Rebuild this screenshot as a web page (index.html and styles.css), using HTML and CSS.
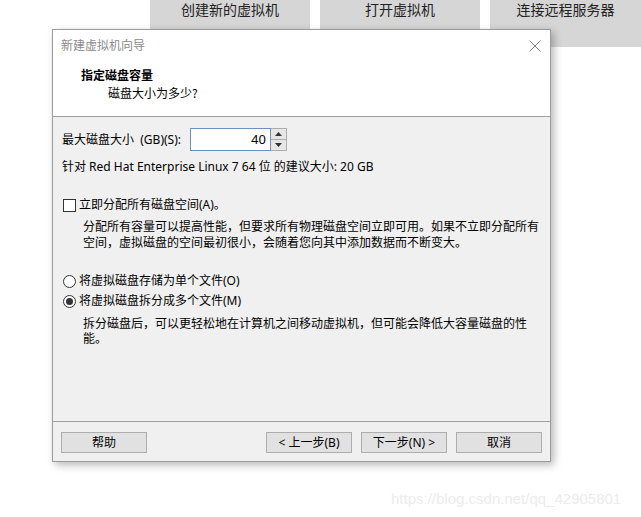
FILE: index.html
```html
<!DOCTYPE html>
<html lang="zh-CN">
<head>
<meta charset="utf-8">
<title>新建虚拟机向导</title>
<link rel="stylesheet" href="styles.css">
</head>
<body>
<div class="topbar">
  <div class="tbtn">创建新的虚拟机</div>
  <div class="tbtn">打开虚拟机</div>
  <div class="tbtn last">连接远程服务器</div>
</div>

<div class="dialog">
  <div class="head">
    <div class="titlebar">
      <span class="title">新建虚拟机向导</span>
      <svg class="close" width="12" height="12" viewBox="0 0 12 12"><path d="M0.5 0.5L11.5 11.5M11.5 0.5L0.5 11.5" stroke="#808080" stroke-width="1" fill="none"/></svg>
    </div>
    <div class="h1">指定磁盘容量</div>
    <div class="h2">磁盘大小为多少?</div>
  </div>

  <div class="body">
    <div class="sizerow">
      <span class="label">最大磁盘大小&nbsp; (GB)(S):</span>
      <div class="spin">
        <div class="spinval">40</div>
        <div class="spinbtns">
          <div class="sb"><svg width="7" height="4" viewBox="0 0 7 4"><path d="M0 4L3.5 0L7 4Z" fill="#333"/></svg></div>
          <div class="sb"><svg width="7" height="4" viewBox="0 0 7 4"><path d="M0 0L3.5 4L7 0Z" fill="#333"/></svg></div>
        </div>
      </div>
    </div>
    <div class="hint">针对 Red Hat Enterprise Linux 7 64 位 的建议大小: 20 GB</div>

    <div class="opt first">
      <span class="check"></span>
      <span>立即分配所有磁盘空间(A)。</span>
    </div>
    <div class="desc">分配所有容量可以提高性能，但要求所有物理磁盘空间立即可用。如果不立即分配所有空间，虚拟磁盘的空间最初很小，会随着您向其中添加数据而不断变大。</div>

    <div class="opt radio1">
      <span class="radio"></span>
      <span>将虚拟磁盘存储为单个文件(O)</span>
    </div>
    <div class="opt radio2">
      <span class="radio on"></span>
      <span>将虚拟磁盘拆分成多个文件(M)</span>
    </div>
    <div class="desc desc2">拆分磁盘后，可以更轻松地在计算机之间移动虚拟机，但可能会降低大容量磁盘的性能。</div>
  </div>

  <div class="foot">
    <div class="btn">帮助</div>
    <div class="spacer"></div>
    <div class="btn">&lt; 上一步(B)</div>
    <div class="btn">下一步(N) &gt;</div>
    <div class="btn">取消</div>
  </div>
</div>

<div class="watermark">https://blog.csdn.net/qq_42905801</div>
</body>
</html>
```

FILE: styles.css
```css
* { box-sizing: border-box; }
html, body {
  margin: 0;
  padding: 0;
  width: 641px;
  height: 517px;
  overflow: hidden;
  background: #ffffff;
  font-family: "Noto Sans", "Noto Sans CJK SC", sans-serif;
}
body { position: relative; }

.topbar {
  display: flex;
  gap: 10px;
  padding-left: 150px;
}
.tbtn {
  width: 160px;
  height: 47px;
  background: #d6d6d6;
  color: #222;
  font-size: 14px;
  line-height: 16px;
  padding-top: 1px;
  text-align: center;
  font-family: "Noto Sans CJK SC", sans-serif;
}
.tbtn.last { flex: 1; }

.dialog {
  position: absolute;
  left: 52px;
  top: 29px;
  width: 499px;
  height: 433px;
  border: 1px solid #9a9a9a;
  background: #f0f0f0;
  display: flex;
  flex-direction: column;
  box-shadow: 3px 3px 8px rgba(0,0,0,0.28);
  font-size: 12px;
  color: #000;
}

.head {
  height: 87px;
  background: #fff;
  border-bottom: 1px solid #a0a0a0;
}
.titlebar {
  height: 29px;
  display: flex;
  align-items: flex-start;
  justify-content: space-between;
  padding: 7px 9px 0 8px;
}
.title {
  color: #8a8a8a;
  line-height: 16px;
  font-family: "Noto Sans CJK SC", sans-serif;
}
.close { margin-top: 3px; }
.h1 {
  margin-top: 8px;
  padding-left: 28px;
  font-weight: bold;
  line-height: 16px;
  font-family: "Noto Sans CJK SC", sans-serif;
}
.h2 {
  margin-top: 2px;
  padding-left: 55px;
  line-height: 16px;
  font-family: "Noto Sans CJK SC", sans-serif;
}

.body {
  height: 304px;
  padding: 11px 9px 0 9px;
}
.sizerow {
  display: flex;
  align-items: center;
  height: 23px;
}
.label { line-height: 16px; }
.spin {
  margin-left: 9px;
  display: flex;
  height: 23px;
}
.spinval {
  width: 81px;
  height: 23px;
  border: 1px solid #6f8fbd;
  background: #fff;
  text-align: right;
  padding-right: 4px;
  line-height: 20px;
  font-size: 13px;
}
.spinbtns {
  width: 16px;
  height: 23px;
  border: 1px solid #adadad;
  border-left: none;
  background: #f0f0f0;
  display: flex;
  flex-direction: column;
}
.sb {
  flex: 1;
  display: flex;
  align-items: center;
  justify-content: center;
  background: #e6e6e6;
}
.sb + .sb { border-top: 1px solid #adadad; }

.hint {
  margin-top: 8px;
  line-height: 16px;
}

.opt {
  display: flex;
  align-items: center;
  gap: 3px;
  line-height: 16px;
  padding-left: 1px;
}
.opt.first { margin-top: 22px; }
.opt.radio1 { margin-top: 22px; }
.opt.radio2 { margin-top: 4px; }

.check {
  width: 13px;
  height: 13px;
  border: 1px solid #333;
  background: #fff;
  flex: none;
}
.radio {
  width: 13px;
  height: 13px;
  border: 1px solid #333;
  border-radius: 50%;
  background: #fff;
  flex: none;
  display: flex;
  align-items: center;
  justify-content: center;
}
.radio.on::after {
  content: "";
  width: 7px;
  height: 7px;
  border-radius: 50%;
  background: #333;
}

.desc {
  margin-top: 6px;
  padding-left: 21px;
  padding-right: 2px;
  line-height: 16px;
}
.desc.desc2 {
  margin-top: 7px;
  line-height: 15px;
}

.foot {
  height: 40px;
  border-top: 1px solid #a0a0a0;
  display: flex;
  gap: 9px;
  padding: 10px 8px 0 8px;
}
.spacer { flex: 1; }
.btn {
  width: 86px;
  height: 21px;
  border: 1px solid #adadad;
  background: #e1e1e1;
  text-align: center;
  line-height: 19px;
}

.watermark {
  position: absolute;
  left: 391px;
  top: 489px;
  font-family: "Liberation Sans", sans-serif;
  font-size: 15px;
  color: #ececec;
  line-height: 20px;
}
```
